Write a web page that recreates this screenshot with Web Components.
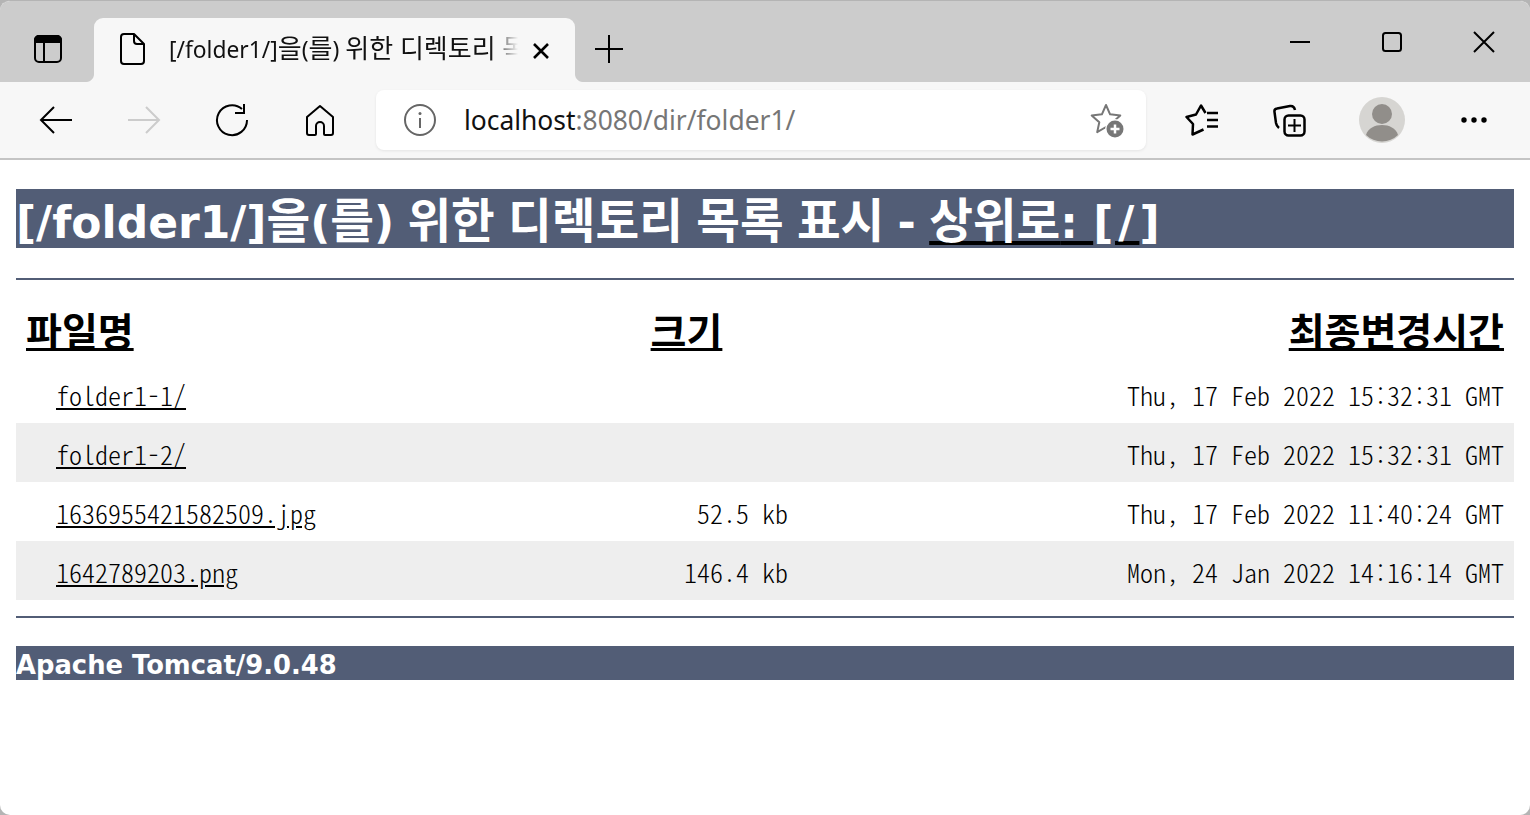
<!DOCTYPE html>
<html lang="ko">
  <head>
    <meta charset="UTF-8" />
    <title>Directory listing</title>
    <style>
      html, body { margin: 0; height: 100%; background: #b4b4b4; overflow: hidden; }
      .lat { font: 700 44px/0 "DejaVu Sans", sans-serif; }
      .wide { letter-spacing: 5px; }
      .ko { font-size: 26px; }
    </style>
  </head>
  <body>
    <template id="browser-window">
      <style>
        :host { display: flex; flex-direction: column; height: 815px; box-sizing: border-box; border-radius: 10px; overflow: hidden; background: #fff; border-top: 1px solid #b4b4b4; font-family: "Noto Sans", "Noto Sans CJK KR", sans-serif; }
        .strip { display: flex; align-items: flex-end; height: 81px; background: #ccc; flex: none; }
        .side { width: 94px; height: 64px; padding: 0 0 2px 2px; box-sizing: border-box; display: flex; align-items: center; justify-content: center; }
        .new { width: 68px; height: 64px; padding-bottom: 2px; box-sizing: border-box; display: flex; align-items: center; justify-content: center; }
        .caption { margin-left: auto; display: flex; align-self: flex-start; }
        .caption div { width: 92px; height: 81px; display: flex; align-items: center; justify-content: center; }
        .toolbar { display: flex; align-items: center; height: 76px; padding: 0 0 0 12px; background: #f7f7f7; border-bottom: 2px solid #c4c4c4; flex: none; }
        .page { flex: 1; min-height: 0; }
        svg { display: block; fill: none; stroke: #000; stroke-width: 2; }
      </style>
      <div class="strip">
        <div class="side">
          <svg width="30" height="30" viewBox="0 0 30 30"><rect x="2" y="2" width="26" height="26" rx="4"/><path d="M2 8V6a4 4 0 0 1 4-4h18a4 4 0 0 1 4 4v2z" fill="#000"/><path d="M11 8v20"/></svg>
        </div>
        <slot name="tab"></slot>
        <div class="new">
          <svg width="30" height="30" viewBox="0 0 30 30"><path d="M15 1v28M1 15h28"/></svg>
        </div>
        <div class="caption">
          <div><svg width="22" height="22" viewBox="0 0 22 22"><path d="M1 11h20"/></svg></div>
          <div><svg width="22" height="22" viewBox="0 0 22 22"><rect x="2" y="2" width="18" height="18" rx="2.5"/></svg></div>
          <div><svg width="22" height="22" viewBox="0 0 22 22"><path d="M1 1l20 20M21 1L1 21"/></svg></div>
        </div>
      </div>
      <div class="toolbar"><slot name="toolbar"></slot></div>
      <div class="page"><slot></slot></div>
    </template>

    <template id="browser-tab">
      <style>
        :host { display: flex; align-items: center; position: relative; width: 481px; height: 64px; padding-bottom: 2px; box-sizing: border-box; background: #f7f7f7; border-radius: 9px 9px 0 0; flex: none; }
        :host::before, :host::after { content: ""; position: absolute; bottom: 0; width: 8px; height: 8px; background: radial-gradient(circle at var(--c) 0, #ccc 7.5px, #f7f7f7 8.5px); }
        :host::before { left: -8px; --c: 0; }
        :host::after { right: -8px; --c: 100%; }
        .doc { margin-left: 24px; flex: none; }
        .title { margin-left: 23px; width: 349px; white-space: nowrap; overflow: hidden; font-size: 22.8px; line-height: 34px; color: #111; -webkit-mask-image: linear-gradient(to right, #000 92%, transparent 100%); mask-image: linear-gradient(to right, #000 92%, transparent 100%); }
        .close { margin-left: 14px; margin-top: 4px; flex: none; }
        svg { display: block; fill: none; stroke: #000; stroke-width: 2; }
      </style>
      <svg class="doc" width="28" height="34" viewBox="0 0 28 34"><path d="M6 2h10l10 10v17a3 3 0 0 1-3 3H6a3 3 0 0 1-3-3V5a3 3 0 0 1 3-3z" stroke-linejoin="round"/><path d="M16 2v7a3 3 0 0 0 3 3h7"/></svg>
      <div class="title"><slot></slot></div>
      <svg class="close" width="18" height="18" viewBox="0 0 18 18" style="stroke-width:2.6"><path d="M2 2l14 14M16 2L2 16"/></svg>
    </template>

    <template id="tool-button">
      <style>
        :host { display: flex; align-items: center; justify-content: center; width: 88px; height: 60px; flex: none; }
      </style>
      <slot></slot>
    </template>

    <template id="address-bar">
      <style>
        :host { display: flex; align-items: center; width: 770px; height: 60px; margin: 0 12px; background: #fff; border-radius: 8px; box-shadow: 0 1px 3px rgba(0,0,0,.08); flex: none; font-size: 26.4px; }
        .info { margin-left: 27px; }
        .url { margin-left: 27px; color: #767676; white-space: nowrap; }
        .url b { font-weight: 400; color: #111; }
        .star { margin-left: auto; margin-right: 20px; }
        svg { display: block; fill: none; }
      </style>
      <svg class="info" width="34" height="34" viewBox="0 0 34 34"><circle cx="17" cy="17" r="15" stroke="#666" stroke-width="2"/><path d="M17 15v10" stroke="#666" stroke-width="2"/><circle cx="17" cy="10.500" r="1.500" fill="#666"/></svg>
      <div class="url"><b>localhost</b>:8080/dir/folder1/</div>
      <svg class="star" width="36" height="36" viewBox="0 0 36 36"><path d="M16 3l4.100 9.300 10.200 1.100-7.600 6.800 2.100 9.900-8.800-5.100-8.800 5.100 2.100-9.900-7.600-6.800 10.200-1.100z" stroke="#777" stroke-width="2" stroke-linejoin="round"/><circle cx="25" cy="27" r="10" fill="#fff"/><circle cx="25" cy="27" r="8.500" fill="#777"/><path d="M25 22.500v9M20.500 27h9" stroke="#fff" stroke-width="2.500"/></svg>
    </template>

    <template id="listing-page">
      <style>
        :host { display: block; padding: 29px 16px 0; color: #000; font-family: "Noto Sans CJK KR", sans-serif; }
        .title { display: block; height: 59px; background: #525d76; color: #fff; font: 700 47.5px/57px "Noto Sans CJK KR", sans-serif; white-space: nowrap; overflow: visible; }
        .rule { height: 2px; background: #525d76; }
        .first { margin-top: 30px; }
        .second { margin-top: 16px; }
        .foot { margin-top: 28px; height: 34px; background: #525d76; color: #fff; font: 700 25.8px/38px "DejaVu Sans", sans-serif; white-space: nowrap; }
        .rows { display: block; margin-top: 19px; }
      </style>
      <div class="title"><slot name="title"></slot></div>
      <div class="rule first"></div>
      <div class="rows"><slot></slot></div>
      <div class="rule second"></div>
      <div class="foot"><slot name="foot"></slot></div>
    </template>

    <template id="listing-row">
      <style>
        :host { display: grid; grid-template-columns: 559px 223px 1fr; height: 59px; align-items: center; box-sizing: border-box; padding-top: 3px; font: 300 26px/52px "Noto Sans CJK KR", sans-serif; font-feature-settings: "hwid"; white-space: pre; }
        :host([striped]) { background: #eee; }
        :host([head]) { height: 65px; padding-top: 0; padding-bottom: 5px; font: 700 39px/60px "Noto Sans CJK KR", sans-serif; font-feature-settings: normal; }
        div { padding: 0 10px; }
        .name { padding-left: 40px; }
        :host([head]) .name { padding-left: 10px; }
        .size { text-align: right; }
        :host([head]) .size { text-align: center; }
        .date { text-align: right; }
        a { color: #000; text-decoration: underline; }
      </style>
      <div class="name"><a><slot name="name"></slot></a></div>
      <div class="size"><slot name="size"></slot></div>
      <div class="date"><slot name="date"></slot></div>
    </template>

    <browser-window>
      <browser-tab slot="tab">[/folder1/]<span class="ko">을</span>(<span class="ko">를</span>) <span class="ko">위한 디렉토리 목록 표시</span> - <span class="ko">상위로</span>: [/]</browser-tab>

      <tool-button slot="toolbar"><svg width="36" height="30" viewBox="0 0 36 30" fill="none" stroke="#000" stroke-width="2"><path d="M34 15H3M16 2L3 15l13 13"/></svg></tool-button>
      <tool-button slot="toolbar"><svg width="36" height="30" viewBox="0 0 36 30" fill="none" stroke="#ccc" stroke-width="2"><path d="M2 15h31M20 2l13 13-13 13"/></svg></tool-button>
      <tool-button slot="toolbar"><svg width="34" height="34" viewBox="0 0 34 34" fill="none" stroke="#000" stroke-width="2"><path d="M27 6a15 15 0 1 0 5 11"/><path d="M29 1v9h-9"/></svg></tool-button>
      <tool-button slot="toolbar"><svg width="32" height="32" viewBox="0 0 32 32" fill="none" stroke="#000" stroke-width="2" stroke-linejoin="round"><path d="M16 2L3 13v16a2 2 0 0 0 2 2h6a1 1 0 0 0 1-1v-8a4 4 0 0 1 8 0v8a1 1 0 0 0 1 1h6a2 2 0 0 0 2-2V13z"/></svg></tool-button>
      <address-bar slot="toolbar"></address-bar>
      <tool-button slot="toolbar"><svg width="34" height="32" viewBox="0 0 34 32" fill="none" stroke="#000" stroke-width="2.500" stroke-linejoin="round"><path d="M20.500 9L16 1.500l-5 9-9.500 2.500 6.500 7-.5 10.500 11-5"/><path d="M22 9h11M22 16h11M22 22.500h11"/></svg></tool-button>
      <tool-button slot="toolbar"><svg width="34" height="33" viewBox="0 0 34 33" fill="none" stroke="#000" stroke-width="2.500" stroke-linejoin="round"><path d="M6 24Q3.500 22 3 19L1.500 8q-.5-3 2.500-3.500L17 2q4-.5 5 4"/><rect x="11.500" y="11.500" width="20" height="20" rx="4"/><path d="M21.500 15v13M15 21.500h13" stroke-width="2"/></svg></tool-button>
      <tool-button slot="toolbar" style="margin-left:4px"><svg width="46" height="46" viewBox="0 0 46 46"><circle cx="23" cy="23" r="23" fill="#d6d5d2"/><circle cx="23" cy="17" r="10" fill="#918e8a"/><path d="M7 38c2-7 9-10 16-10s14 3 16 10a23 23 0 0 1-32 0z" fill="#918e8a"/></svg></tool-button>
      <tool-button slot="toolbar" style="margin-left:4px"><svg width="26" height="6" viewBox="0 0 26 6" fill="#000"><circle cx="3" cy="3" r="2.700"/><circle cx="13" cy="3" r="2.700"/><circle cx="23" cy="3" r="2.700"/></svg></tool-button>

      <listing-page>
        <span slot="title"><span class="lat">[/folder1/]</span>을<span class="lat">(</span>를<span class="lat">)</span> 위한 디렉토리 목록 표시 <span class="lat">-</span> <u style="text-decoration-color:#000">상위로<span class="lat">: </span><span class="lat wide">[/</span><span class="lat">]</span></u></span>
        <listing-row head><span slot="name">파일명</span><u slot="size">크기</u><u slot="date">최종변경시간</u></listing-row>
        <listing-row><span slot="name">folder1-1/</span><span slot="date">Thu, 17 Feb 2022 15:32:31 GMT</span></listing-row>
        <listing-row striped><span slot="name">folder1-2/</span><span slot="date">Thu, 17 Feb 2022 15:32:31 GMT</span></listing-row>
        <listing-row><span slot="name">1636955421582509.jpg</span><span slot="size">52.5 kb</span><span slot="date">Thu, 17 Feb 2022 11:40:24 GMT</span></listing-row>
        <listing-row striped><span slot="name">1642789203.png</span><span slot="size">146.4 kb</span><span slot="date">Mon, 24 Jan 2022 14:16:14 GMT</span></listing-row>
        <span slot="foot">Apache Tomcat/9.0.48</span>
      </listing-page>
    </browser-window>

    <script>
      // every element just clones its template into an open shadow root
      for (const name of ['browser-window', 'browser-tab', 'tool-button', 'address-bar', 'listing-page', 'listing-row']) {
        customElements.define(
          name,
          class extends HTMLElement {
            constructor() {
              super()
              const template = document.getElementById(name)
              this.attachShadow({ mode: 'open' }).appendChild(template.content.cloneNode(true))
            }
          }
        )
      }
    </script>
  </body>
</html>
